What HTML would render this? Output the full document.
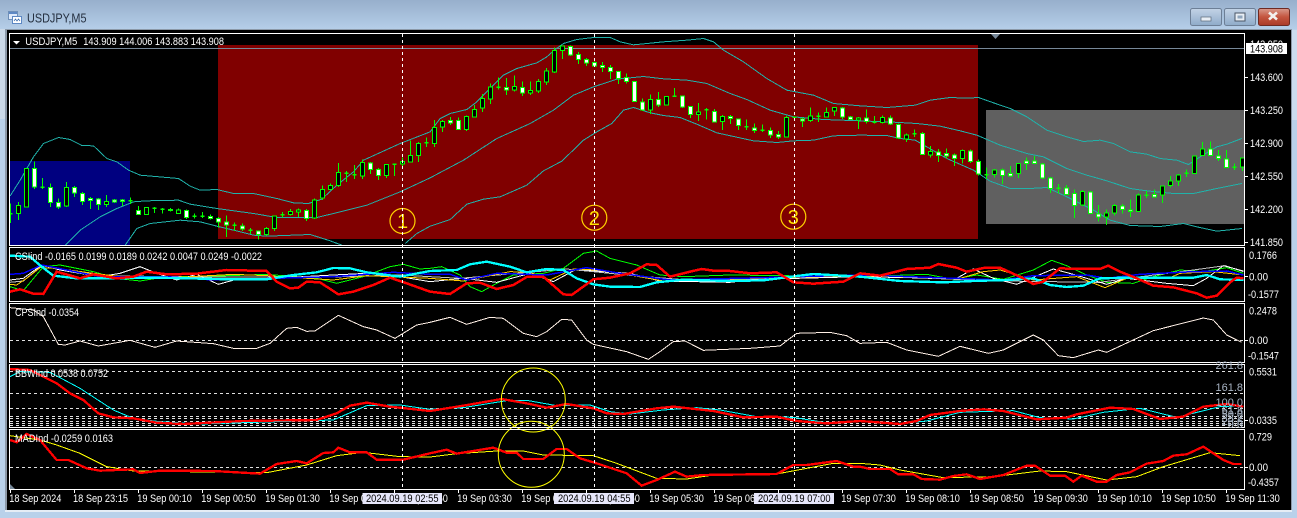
<!DOCTYPE html>
<html lang="en"><head><meta charset="utf-8"><title>USDJPY,M5</title>
<style>
html,body{margin:0;padding:0;background:#b9d1ea;width:1297px;height:518px;overflow:hidden}
svg{display:block}
text{font-family:"Liberation Sans",sans-serif;font-size:11px;fill:#fff}
.l{fill:none;shape-rendering:crispEdges}
</style></head><body>
<svg width="1297" height="518" viewBox="0 0 1297 518" xmlns="http://www.w3.org/2000/svg">
<defs>
<linearGradient id="tg" x1="0" y1="0" x2="0" y2="1"><stop offset="0" stop-color="#97afcc"/><stop offset="1" stop-color="#b5cee8"/></linearGradient>
<linearGradient id="bg" x1="0" y1="0" x2="0" y2="1"><stop offset="0" stop-color="#c3d3e6"/><stop offset=".5" stop-color="#a9bfd8"/><stop offset="1" stop-color="#8fabc9"/></linearGradient>
<linearGradient id="cg" x1="0" y1="0" x2="0" y2="1"><stop offset="0" stop-color="#d99a8c"/><stop offset=".5" stop-color="#c4553f"/><stop offset="1" stop-color="#a93a28"/></linearGradient>
<clipPath id="c1"><rect x="10" y="34" width="1234" height="211"/></clipPath>
<clipPath id="c2"><rect x="10" y="248" width="1234" height="53"/></clipPath>
<clipPath id="c3"><rect x="10" y="304" width="1234" height="58"/></clipPath>
<clipPath id="c4"><rect x="10" y="365" width="1234" height="62"/></clipPath>
<clipPath id="c5"><rect x="10" y="430" width="1234" height="59"/></clipPath>
</defs>
<rect width="1297" height="518" fill="#b9d1ea"/>
<rect width="1297" height="29" fill="url(#tg)"/>
<rect x="0" y="29" width="5" height="90" fill="#cbd9e8"/>
<rect x="1292" y="30" width="5" height="90" fill="#cbdcee"/>
<!-- icon -->
<g shape-rendering="crispEdges">
<rect x="8.5" y="11.5" width="9" height="8" fill="#dfeafa" stroke="#6f8fb8"/>
<rect x="9" y="12" width="8" height="2" fill="#5d88c4"/>
<rect x="12.5" y="16.5" width="9" height="7" fill="#fff" stroke="#5d88c4"/>
</g>
<path d="M14 21l1.500-2 1.500 2 1.500-2 1.500 2" fill="none" stroke="#3f6fb0" stroke-width=".8"/>
<text x="27" y="22.500" style="font-size:13px;fill:#253040" textLength="59.500" lengthAdjust="spacingAndGlyphs">USDJPY,M5</text>
<!-- window buttons -->
<rect x="1190.500" y="8.500" width="31" height="17" rx="2" fill="url(#bg)" stroke="#6d7f96"/>
<rect x="1201" y="17" width="10" height="4" fill="#e8eef5" stroke="#5b6878" stroke-width=".7"/>
<rect x="1224.500" y="8.500" width="31" height="17" rx="2" fill="url(#bg)" stroke="#6d7f96"/>
<rect x="1235" y="13" width="10" height="8" fill="#e8eef5" stroke="#4a5666"/>
<rect x="1237.500" y="15.500" width="5" height="3" fill="#8fa5bd"/>
<rect x="1258.500" y="8.500" width="31" height="17" rx="2" fill="url(#cg)" stroke="#6e2a22"/>
<path d="M1269 12.500l8 7M1277 12.500l-8 7" stroke="#f3f0ee" stroke-width="2.600" fill="none"/>
<!-- frame + black -->
<rect x="5" y="29" width="1287" height="482" fill="#8c99a8"/>
<rect x="7" y="30" width="1284" height="480" fill="#000"/>
<rect x="5" y="510" width="1287" height="2" fill="#e6edf5"/>
<!-- main chart bg -->
<rect x="10" y="161" width="120" height="84" fill="#000080"/>
<rect x="218" y="45" width="760" height="194" fill="#800000"/>
<rect x="986" y="110" width="258" height="114" fill="#606060"/>
<path d="M10 48.500H1245" stroke="#778899" stroke-width="1" shape-rendering="crispEdges"/>
<path d="M991 34h9l-4.500 5z" fill="#778899"/>
<!-- circled markers -->
<g fill="none" stroke="#ffd000" stroke-width="1.200">
<circle cx="402.500" cy="221" r="12.500"/><circle cx="594.300" cy="217.700" r="12.500"/><circle cx="793.300" cy="216.700" r="12.500"/>
</g>
<g text-anchor="middle">
<text x="402.500" y="228" style="font-size:20px;fill:#ffe000">1</text>
<text x="594.300" y="225" style="font-size:20px;fill:#ffe000">2</text>
<text x="793.300" y="224" style="font-size:20px;fill:#ffe000">3</text>
</g>
<g clip-path="url(#c1)">
<g transform="scale(.33333) translate(.5 .5)">
<!-- bands -->
<g class="l" stroke="#20b2aa" stroke-width="3">
<path d="M30 587L60 540 100 470 130 430 175 412 210 418 245 436 280 437 320 475 350 485 385 510 420 525 535 535 570 558 600 570 650 568 700 580 760 580 830 595 880 608 925 610 965 597 1010 555 1060 515 1090 480 1200 430 1290 395 1320 355 1350 340 1400 328 1430 305 1470 265 1510 225 1550 205 1610 188 1640 170 1665 148 1690 130 1730 118 1780 112 1830 112 1860 125 1900 134 1990 125 2060 120 2110 115 2140 125 2170 150 2230 185 2300 235 2360 270 2440 285 2500 310 2580 317 2660 322 2745 315 2790 300 2850 292 2900 294 2935 292 2980 308 3030 325 3080 350 3140 390 3200 410 3250 424 3300 420 3340 430 3390 455 3440 462 3480 475 3530 480 3565 493 3600 470 3650 440 3680 432 3725 415"/>
<path d="M195 735L240 690 300 650 350 625 400 605 440 602 535 600 570 612 650 625 760 640 830 652 950 652 1000 640 1100 615 1200 575 1290 533 1390 480 1490 415 1590 370 1660 330 1720 285 1780 260 1850 237 1930 229 1990 236 2060 240 2120 250 2190 280 2240 298 2310 330 2380 350 2470 358 2580 362 2680 366 2750 370 2820 378 2880 392 2930 405 3000 435 3080 460 3130 470 3200 505 3260 525 3320 542 3390 565 3440 572 3520 580 3580 580 3650 565 3725 550"/>
<path d="M375 735L410 685 450 670 540 660 600 665 650 678 700 690 760 705 800 708 930 703 990 722 1025 735M1215 730L1250 700 1290 678 1350 658 1400 612 1450 597 1500 590 1580 555 1630 512 1685 483 1750 420 1790 395 1835 370 1870 330 1900 322 1950 338 1990 346 2040 352 2090 372 2150 398 2260 422 2330 427 2380 422 2440 420 2500 407 2580 405 2660 406 2700 415 2745 420 2780 440 2840 475 2920 510 2970 543 3030 565 3090 565 3140 562 3200 590 3280 630 3330 660 3390 676 3480 679 3550 670 3590 680 3650 693 3725 685"/>
</g>
<!-- candles group 1 -->
<g shape-rendering="crispEdges">
<path fill="none" stroke="#00ff00" stroke-width="3" d="M31 610V668M55 605V660M79 505V620M103 484V566M127 534V567M151 550V620M175 595V626M199 546V620M223 558V590M247 575V615M271 590V627M295 593V630M319 585V621M343 597V608M367 597V618M391 592V612M415 617V644M439 620V644M463 621V639M487 624V640M511 624V634M535 625V641M559 628V657M583 640V655M607 636V654M631 643V658M655 650V682M679 646V710M703 667V692M727 670V692M751 684V702M775 692V718M799 680V706M823 646V692M847 636V652M871 626V646M895 625V651M919 627V662M943 595V656M967 556V600M991 550V570M1015 488V560M1039 513V545M1063 495V536M1087 478V537M1111 485V522M1135 504V540M1159 492V533M1183 490V527M1207 472V498M1231 421V487M1255 425V485M1279 412V440"/>
<path fill="none" stroke="#00ff00" stroke-width="4.500" d="M25 641h12M121 562h12M385 602h12M457 625h12M481 628h12M577 648h12M601 649h12M697 675h12M745 690h12M841 644h12M1033 519h12M1057 524h12M1177 492h12M1273 428h12"/>
<path fill="#fff" stroke="#00ff00" stroke-width="3" d="M97 505h12V560h-12zM145 562h12V607h-12zM169 607h12V620h-12zM217 562h12V578h-12zM241 580h12V604h-12zM265 595h12V601h-12zM289 596h12V613h-12zM337 599h12V605h-12zM361 599h12V604h-12zM409 631h12V643h-12zM505 628h12V631h-12zM553 631h12V652h-12zM625 649h12V655h-12zM649 655h12V665h-12zM673 665h12V675h-12zM721 677h12V687h-12zM769 692h12V703h-12zM913 631h12V655h-12zM1105 488h12V508h-12zM1129 508h12V526h-12z"/>
<path fill="#000" stroke="#00ff00" stroke-width="3" d="M49 616h12V640h-12zM73 505h12V620h-12zM193 562h12V617h-12zM313 604h12V613h-12zM433 622h12V643h-12zM529 630h12V640h-12zM793 685h12V703h-12zM817 647h12V685h-12zM865 634h12V643h-12zM889 630h12V636h-12zM937 599h12V654h-12zM961 568h12V594h-12zM985 556h12V568h-12zM1009 517h12V556h-12zM1081 487h12V527h-12zM1153 493h12V526h-12zM1201 484h12V491h-12zM1225 466h12V485h-12zM1249 430h12V466h-12z"/>
</g>
<!-- candles group 2 -->
<g transform="translate(1290 0)" shape-rendering="crispEdges">
<path fill="none" stroke="#00ff00" stroke-width="3" d="M13 360V440M37 360V395M61 350V374M85 352V390M109 346V392M133 315V352M157 282V335M181 250V311M205 232V268M229 234V285M253 226V274M277 244V288M301 244V285M325 236V278M349 204V254M373 142V218M397 136V177M421 136V167M445 156V191M469 173V197M493 184V200M517 186V216M541 195V237M565 213V251M589 220V250M613 243V306M637 295V332M661 283V342M685 276V320M709 287V316M733 264V291M757 286V323M781 318V354M805 309V362M829 324V358M853 327V367M877 344V390M901 345V372M925 355V390M949 358V390M973 370V398M997 373V396M1021 382V413M1045 392V416M1069 348V411M1093 350V358M1117 352V381M1141 322V366M1165 337V365M1189 322V352M1213 320V348M1237 320V356M1261 348V360M1285 350V386"/>
<path fill="none" stroke="#00ff00" stroke-width="4.500" d="M199 261h12M727 288h12M823 329h12M943 380h12M991 391h12M1087 352h12M1159 348h12"/>
<path fill="#fff" stroke="#00ff00" stroke-width="3" d="M55 361h12V368h-12zM79 361h12V388h-12zM223 262h12V269h-12zM271 262h12V278h-12zM415 139h12V164h-12zM439 163h12V178h-12zM463 178h12V188h-12zM487 187h12V197h-12zM511 196h12V202h-12zM535 202h12V214h-12zM559 214h12V235h-12zM583 232h12V244h-12zM607 244h12V304h-12zM631 305h12V330h-12zM679 298h12V314h-12zM751 287h12V320h-12zM775 319h12V343h-12zM847 334h12V365h-12zM895 349h12V355h-12zM919 356h12V376h-12zM967 383h12V391h-12zM1015 391h12V404h-12zM1039 403h12V410h-12zM1111 356h12V362h-12zM1231 323h12V350h-12zM1255 350h12V358h-12z"/>
<path fill="#000" stroke="#00ff00" stroke-width="3" d="M7 382h12V430h-12zM31 364h12V380h-12zM103 349h12V388h-12zM127 328h12V350h-12zM151 295h12V323h-12zM175 260h12V296h-12zM247 259h12V269h-12zM295 271h12V278h-12zM319 244h12V272h-12zM343 213h12V245h-12zM367 151h12V215h-12zM391 138h12V151h-12zM655 298h12V329h-12zM703 289h12V314h-12zM799 335h12V343h-12zM871 349h12V364h-12zM1063 352h12V410h-12zM1135 347h12V361h-12zM1183 337h12V350h-12zM1207 322h12V333h-12zM1279 353h12V360h-12z"/>
</g>
<!-- candles group 3 -->
<g transform="translate(2580 0)" shape-rendering="crispEdges">
<path fill="none" stroke="#00ff00" stroke-width="3" d="M19 328V370M43 348V370M67 346V370M91 346V374M115 370V416M139 400V425M163 388V410M187 396V465M211 438V472M235 447V485M259 445V475M283 460V497M307 448V490M331 448V488M355 478V526M379 502V536M403 506V532M427 505V552M451 498V530M475 488V534M499 472V510M523 468V492M547 488V536M571 530V578M595 552V580M619 555V585M643 568V653M667 570V618M691 572V642M715 615V664M739 628V674M763 612V646M787 612V640M811 598V650M835 580V636M859 572V594M883 568V592M907 556V608M931 528V562M955 522V558M979 508V530M1003 466V522M1027 426V468M1051 424V468M1075 450V482M1099 450V504M1123 490V510M1147 472V512"/>
<path fill="none" stroke="#00ff00" stroke-width="4.500" d="M37 366h12M157 401h12M373 524h12M589 565h12M853 586h12M973 520h12M1117 501h12"/>
<path fill="#fff" stroke="#00ff00" stroke-width="3" d="M13 353h12V364h-12zM85 353h12V372h-12zM109 373h12V414h-12zM181 400h12V463h-12zM229 456h12V466h-12zM253 460h12V468h-12zM277 464h12V475h-12zM325 452h12V484h-12zM349 484h12V522h-12zM421 509h12V526h-12zM445 520h12V528h-12zM493 482h12V490h-12zM517 482h12V490h-12zM541 491h12V534h-12zM565 533h12V565h-12zM613 563h12V583h-12zM637 580h12V616h-12zM685 575h12V640h-12zM709 641h12V650h-12zM781 617h12V628h-12zM805 629h12V634h-12zM877 583h12V590h-12zM1045 446h12V466h-12zM1069 467h12V475h-12zM1093 476h12V502h-12z"/>
<path fill="#000" stroke="#00ff00" stroke-width="3" d="M61 352h12V367h-12zM133 404h12V416h-12zM205 454h12V464h-12zM301 451h12V475h-12zM397 509h12V523h-12zM469 490h12V520h-12zM661 574h12V614h-12zM733 638h12V650h-12zM757 616h12V638h-12zM829 584h12V634h-12zM901 557h12V584h-12zM925 542h12V556h-12zM949 524h12V542h-12zM997 467h12V520h-12zM1021 446h12V466h-12zM1141 474h12V500h-12z"/>
</g>
</g></g>
<!-- panel 2: CSI -->
<g clip-path="url(#c2)"><g transform="scale(.33333) translate(0 735)" class="l">
<path stroke="#00ff00" stroke-width="3" d="M30 125L70 137 130 65 180 60 280 80 350 100 420 108 500 95 600 95 800 88 950 100 1010 115 1090 95 1170 65 1210 58 1260 72 1290 70 1325 65 1380 90 1410 125 1445 140 1490 115 1540 90 1630 85 1690 70 1750 25 1790 18 1830 40 1910 60 1980 90 2050 95 2190 90 2580 95 2780 88 2860 103 2930 90 3010 103 3100 75 3155 46 3200 62 3260 90 3320 112 3400 115 3460 95 3540 75 3610 80 3680 68 3730 85"/>
<path stroke="#c0c0c0" stroke-width="3" d="M30 112L70 108 125 62 300 92 600 96 1000 96 1200 90 1380 100 1700 72 1900 92 2100 108 2580 92 3000 108 3300 112 3400 98 3580 75 3675 62 3730 80"/>
<path stroke="#ffffff" stroke-width="3" d="M30 105L70 100 125 60 180 75 300 95 360 85 420 65 470 85 530 105 590 88 655 118 720 100 820 100 1000 90 1100 85 1200 95 1290 110 1390 100 1490 112 1590 85 1660 110 1730 72 1810 80 1890 85 1980 108 2190 112 2290 100 2390 100 2580 95 2820 100 2870 100 2920 72 2980 100 3050 118 3160 72 3220 88 3320 118 3380 100 3500 115 3580 122 3620 100 3670 62 3730 78"/>
<path stroke="#ffcc00" stroke-width="3" d="M30 118L50 120 80 100 120 68 170 70 280 85 400 100 480 100 700 88 800 92 1000 105 1100 92 1290 100 1390 108 1530 80 1590 82 1650 105 1720 72 1790 75 1890 90 1990 108 2580 92 2880 100 2950 80 3000 75 3100 105 3230 95 3315 128 3380 100 3510 98 3540 85 3640 80 3730 90"/>
<path stroke="#0000ff" stroke-width="4.500" d="M30 88L70 85 125 60 200 75 300 95 500 95 640 105 1000 95 1180 82 1290 88 1350 88 1400 105 1490 85 1640 90 1760 68 1860 85 2010 105 2290 98 2580 90 3010 105 3100 92 3260 90 3320 100 3420 88 3580 80 3680 78 3730 90"/>
<path stroke="#00ffff" stroke-width="7" d="M30 32L90 35 125 65 160 92 230 100 330 100 470 98 690 103 800 103 880 90 950 82 1000 69 1050 70 1100 82 1200 95 1290 78 1370 75 1410 58 1460 50 1530 65 1580 82 1640 72 1690 75 1730 100 1780 118 1830 125 1920 126 1970 112 2050 104 2190 108 2290 106 2390 93 2440 87 2580 95 2700 108 2830 112 2920 108 3020 105 3100 100 3150 120 3200 126 3250 122 3300 100 3380 98 3580 98 3620 90 3660 103 3730 105"/>
<path stroke="#ff0000" stroke-width="7.500" d="M30 140L60 133 100 146 130 147 170 80 240 100 280 88 350 100 400 95 440 80 500 88 590 86 680 75 800 78 830 110 870 130 895 128 920 110 960 112 1015 148 1060 140 1120 120 1170 98 1220 115 1290 140 1350 147 1400 115 1440 113 1490 132 1540 120 1580 96 1630 95 1690 148 1715 150 1780 103 1830 98 1890 85 1940 58 1970 60 2010 95 2070 80 2105 72 2140 77 2190 78 2250 85 2330 82 2380 112 2440 116 2530 110 2580 85 2640 92 2720 72 2790 68 2815 57 2870 68 2900 80 2955 68 3000 68 3070 100 3100 117 3130 110 3180 70 3240 72 3300 72 3325 62 3360 80 3410 100 3460 122 3520 127 3590 145 3620 158 3650 152 3690 112 3710 98 3730 100"/>
</g></g>
<!-- panel 3: CPS -->
<path d="M10 340.500H1244" stroke="#e0e0e0" stroke-dasharray="3 3" shape-rendering="crispEdges"/>
<g clip-path="url(#c3)"><g transform="scale(.33333) translate(0 735)" class="l">
<path stroke="#fff0e6" stroke-width="3" d="M30 188L100 195 130 215 175 298 195 300 240 288 295 303 390 286 465 307 530 288 640 296 700 310 770 310 810 295 860 250 890 247 920 259 945 258 1015 211 1090 245 1130 255 1185 280 1250 240 1290 232 1350 217 1400 238 1470 217 1510 220 1570 265 1610 275 1640 260 1685 223 1715 225 1760 285 1780 298 1880 320 1945 343 1980 320 2020 290 2055 288 2110 316 2250 310 2340 303 2390 265 2490 262 2540 272 2580 295 2660 292 2720 315 2815 334 2880 304 2965 325 3010 315 3100 270 3130 285 3175 332 3220 338 3295 315 3320 322 3460 257 3610 219 3640 225 3680 270 3725 292"/>
</g></g>
<!-- panel 4: BBW levels -->
<g stroke="#e0e0e0" stroke-dasharray="3 3" shape-rendering="crispEdges">
<path d="M10 371.500H1244M10 393.500H1244M10 408.500H1244M10 416.500H1244M10 418.500H1244M10 421.500H1244M10 423.500H1244M10 425.500H1244"/>
</g>
<g clip-path="url(#c4)"><g transform="scale(.33333) translate(0 1095)" class="l">
<path stroke="#00ffff" stroke-width="3" d="M30 35L60 20 150 22 240 70 340 135 400 160 480 170 600 177 1000 165 1100 122 1200 120 1290 133 1390 128 1520 107 1580 106 1670 122 1770 120 1830 140 1890 147 1990 135 2090 128 2160 135 2270 155 2380 157 2490 175 2580 170 2710 175 2780 168 2880 142 3040 137 3120 158 3220 162 3310 142 3420 130 3530 157 3660 125 3725 122"/>
<path stroke="#ff0000" stroke-width="7" d="M30 12L90 15 170 55 210 85 250 105 295 145 340 157 400 160 470 173 550 177 730 168 950 165 1010 145 1050 122 1100 113 1170 125 1290 138 1390 122 1505 102 1580 115 1640 128 1700 117 1780 130 1820 145 1870 147 1970 130 2020 125 2140 138 2230 157 2330 155 2390 168 2480 175 2580 168 2700 177 2750 168 2790 150 2880 138 2950 133 3010 138 3110 163 3200 158 3230 148 3330 128 3400 132 3480 162 3550 155 3610 125 3680 117 3730 125"/>
</g></g>
<!-- panel 5: MAD -->
<path d="M10 467.500H1244" stroke="#e0e0e0" stroke-dasharray="3 3" shape-rendering="crispEdges"/>
<path d="M10 484V489H15z" fill="#778899"/>
<g clip-path="url(#c5)"><g transform="scale(.33333) translate(0 1095)" class="l">
<path stroke="#ffff00" stroke-width="3" d="M30 212L120 225 170 240 240 265 320 305 400 318 700 322 800 323 920 300 1010 272 1090 262 1200 275 1290 276 1370 266 1490 258 1570 258 1630 270 1780 272 1850 295 1970 340 2060 342 2140 330 2330 327 2500 295 2580 295 2640 300 2700 315 2830 338 2980 335 3120 318 3200 320 3320 345 3410 335 3490 305 3630 263 3720 272"/>
<path stroke="#ff0000" stroke-width="7" d="M30 225L50 232 80 207 120 225 170 285 205 285 260 310 300 317 400 313 420 324 480 317 640 318 780 326 830 297 890 288 920 295 970 264 1000 262 1015 248 1050 262 1100 262 1130 284 1210 284 1290 265 1340 254 1370 266 1480 248 1520 263 1550 263 1570 282 1630 282 1670 252 1700 252 1740 280 1790 295 1880 325 1925 362 1970 345 2025 320 2060 335 2110 330 2330 327 2380 300 2420 300 2510 288 2560 305 2580 305 2610 312 2670 312 2695 328 2740 328 2765 342 2820 344 2860 333 2900 328 2940 342 3010 330 3080 302 3105 302 3150 332 3195 332 3220 350 3245 332 3290 350 3320 350 3350 330 3390 322 3440 296 3490 288 3520 272 3560 268 3610 245 3670 285 3700 297 3725 297"/>
</g></g>
<!-- dashed verticals -->
<g stroke="#fff" stroke-dasharray="3 3" shape-rendering="crispEdges">
<path d="M402.500 34V489M594.500 34V489M794.500 34V489"/>
</g>
<!-- yellow ellipses -->
<g fill="none" stroke="#ffff00" stroke-width="1">
<circle cx="533.300" cy="400" r="32"/><circle cx="531.300" cy="454.300" r="33"/>
</g>
<!-- panel outlines -->
<g fill="none" stroke="#fff" shape-rendering="crispEdges">
<rect x="9.500" y="33.500" width="1235" height="212"/>
<rect x="9.500" y="247.500" width="1235" height="54"/>
<rect x="9.500" y="303.500" width="1235" height="59"/>
<rect x="9.500" y="364.500" width="1235" height="63"/>
<rect x="9.500" y="429.500" width="1235" height="60"/>
<path d="M1245 77.500h3M1245 110.500h3M1245 143.500h3M1245 176.500h3M1245 209.500h3M1245 242.500h3M1245 276.500h3M1245 340.500h3M1245 420.500h3M1245 467.500h3"/>
<path d="M10.500 490v3M74.500 490v3M138.500 490v3M202.500 490v3M266.500 490v3M330.500 490v3M394.500 490v3M458.500 490v3M522.500 490v3M586.500 490v3M650.500 490v3M714.500 490v3M778.500 490v3M842.500 490v3M906.500 490v3M970.500 490v3M1034.500 490v3M1098.500 490v3M1162.500 490v3M1226.500 490v3"/>
</g>
<!-- header text -->
<path d="M13 41h7l-3.500 3.500z" fill="#fff"/>
<text x="25.300" y="45" textLength="52" lengthAdjust="spacingAndGlyphs">USDJPY,M5</text>
<text x="83.300" y="45" textLength="140.700" lengthAdjust="spacingAndGlyphs">143.909 144.006 143.883 143.908</text>
<text x="15" y="260" textLength="247" lengthAdjust="spacingAndGlyphs">CSIind -0.0165 0.0199 0.0189 0.0242 0.0047 0.0249 -0.0022</text>
<text x="15" y="316" textLength="64" lengthAdjust="spacingAndGlyphs">CPSInd -0.0354</text>
<text x="15" y="377" textLength="93" lengthAdjust="spacingAndGlyphs">BBWInd 0.0538 0.0752</text>
<text x="15" y="442" textLength="98" lengthAdjust="spacingAndGlyphs">MADInd -0.0259 0.0163</text>
<!-- fib labels -->
<g text-anchor="end">
<text x="1243" y="369" style="fill:#a8b4c4">261.8</text>
<text x="1243" y="391" style="fill:#a8b4c4">161.8</text>
<text x="1243" y="406" style="fill:#a8b4c4">100.0</text>
<text x="1243" y="414" style="fill:#a8b4c4">61.8</text>
<text x="1243" y="418" style="fill:#a8b4c4">50.0</text>
<text x="1243" y="422" style="fill:#a8b4c4">38.2</text>
<text x="1243" y="425" style="fill:#a8b4c4">23.6</text>
<text x="1243" y="428" style="fill:#a8b4c4">0.0</text>
</g>
<!-- price axis -->
<text x="1250" y="48" textLength="33" lengthAdjust="spacingAndGlyphs">143.950</text>
<rect x="1246" y="43" width="41" height="11" fill="#fff"/>
<text x="1250" y="52.500" style="fill:#000" textLength="33" lengthAdjust="spacingAndGlyphs">143.908</text>
<text x="1250" y="81" textLength="33" lengthAdjust="spacingAndGlyphs">143.600</text>
<text x="1250" y="114" textLength="33" lengthAdjust="spacingAndGlyphs">143.250</text>
<text x="1250" y="147" textLength="33" lengthAdjust="spacingAndGlyphs">142.900</text>
<text x="1250" y="180" textLength="33" lengthAdjust="spacingAndGlyphs">142.550</text>
<text x="1250" y="213" textLength="33" lengthAdjust="spacingAndGlyphs">142.200</text>
<text x="1250" y="246" textLength="33" lengthAdjust="spacingAndGlyphs">141.850</text>
<text x="1249" y="259" textLength="28" lengthAdjust="spacingAndGlyphs">0.1766</text>
<text x="1249" y="280.500" textLength="19" lengthAdjust="spacingAndGlyphs">0.00</text>
<text x="1248" y="298" textLength="31" lengthAdjust="spacingAndGlyphs">-0.1577</text>
<text x="1249" y="314.500" textLength="28" lengthAdjust="spacingAndGlyphs">0.2478</text>
<text x="1249" y="344" textLength="19" lengthAdjust="spacingAndGlyphs">0.00</text>
<text x="1248" y="359.500" textLength="31" lengthAdjust="spacingAndGlyphs">-0.1547</text>
<text x="1249" y="375.500" textLength="28" lengthAdjust="spacingAndGlyphs">0.5531</text>
<text x="1249" y="424" textLength="28" lengthAdjust="spacingAndGlyphs">0.0335</text>
<text x="1249" y="440.500" textLength="23" lengthAdjust="spacingAndGlyphs">0.729</text>
<text x="1249" y="471" textLength="19" lengthAdjust="spacingAndGlyphs">0.00</text>
<text x="1248" y="486" textLength="31" lengthAdjust="spacingAndGlyphs">-0.4357</text>
<!-- time axis -->
<g>
<text x="9.300" y="502" textLength="52" lengthAdjust="spacingAndGlyphs">18 Sep 2024</text>
<text x="73" y="502" textLength="55" lengthAdjust="spacingAndGlyphs">18 Sep 23:15</text>
<text x="137.300" y="502" textLength="54.500" lengthAdjust="spacingAndGlyphs">19 Sep 00:10</text>
<text x="201.300" y="502" textLength="54.500" lengthAdjust="spacingAndGlyphs">19 Sep 00:50</text>
<text x="265.300" y="502" textLength="54.500" lengthAdjust="spacingAndGlyphs">19 Sep 01:30</text>
<text x="329.300" y="502" textLength="54.500" lengthAdjust="spacingAndGlyphs">19 Sep 02:10</text>
<text x="393.300" y="502" textLength="54.500" lengthAdjust="spacingAndGlyphs">19 Sep 02:50</text>
<text x="457.300" y="502" textLength="54.500" lengthAdjust="spacingAndGlyphs">19 Sep 03:30</text>
<text x="521.300" y="502" textLength="54.500" lengthAdjust="spacingAndGlyphs">19 Sep 04:10</text>
<text x="585.300" y="502" textLength="54.500" lengthAdjust="spacingAndGlyphs">19 Sep 04:50</text>
<text x="649.300" y="502" textLength="54.500" lengthAdjust="spacingAndGlyphs">19 Sep 05:30</text>
<text x="713.300" y="502" textLength="54.500" lengthAdjust="spacingAndGlyphs">19 Sep 06:10</text>
<text x="841.300" y="502" textLength="54.500" lengthAdjust="spacingAndGlyphs">19 Sep 07:30</text>
<text x="905.300" y="502" textLength="54.500" lengthAdjust="spacingAndGlyphs">19 Sep 08:10</text>
<text x="969.300" y="502" textLength="54.500" lengthAdjust="spacingAndGlyphs">19 Sep 08:50</text>
<text x="1033.300" y="502" textLength="54.500" lengthAdjust="spacingAndGlyphs">19 Sep 09:30</text>
<text x="1097.300" y="502" textLength="54.500" lengthAdjust="spacingAndGlyphs">19 Sep 10:10</text>
<text x="1161.300" y="502" textLength="54.500" lengthAdjust="spacingAndGlyphs">19 Sep 10:50</text>
<text x="1225.300" y="502" textLength="54.500" lengthAdjust="spacingAndGlyphs">19 Sep 11:30</text>
</g>
<rect x="362.500" y="493" width="79.500" height="11" fill="#e6e6fa"/>
<rect x="554" y="493" width="80" height="11" fill="#e6e6fa"/>
<rect x="754" y="493" width="80" height="11" fill="#e6e6fa"/>
<text x="366" y="502" style="fill:#000" textLength="72.500" lengthAdjust="spacingAndGlyphs">2024.09.19 02:55</text>
<text x="558" y="502" style="fill:#000" textLength="72.500" lengthAdjust="spacingAndGlyphs">2024.09.19 04:55</text>
<text x="758" y="502" style="fill:#000" textLength="72.500" lengthAdjust="spacingAndGlyphs">2024.09.19 07:00</text>
</svg>
</body></html>
